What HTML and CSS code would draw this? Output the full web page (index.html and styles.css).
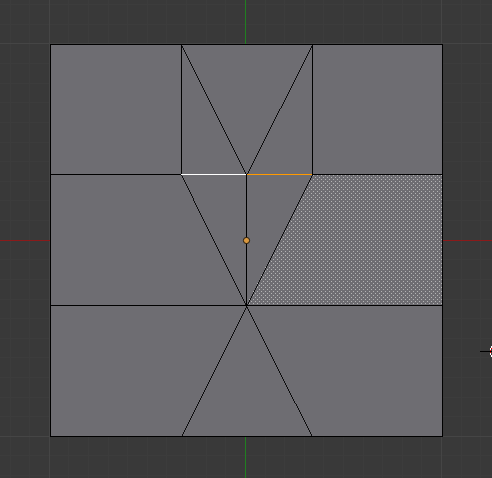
FILE: index.html

```html
<!DOCTYPE html>
<html lang="en">
<head>
<meta charset="utf-8">
<title>Viewport</title>
<link rel="stylesheet" href="styles.css">
</head>
<body>
<svg class="viewport" width="492" height="478" viewBox="0 0 492 478" shape-rendering="crispEdges">
  <defs>
    <pattern id="dots" width="4" height="4" patternUnits="userSpaceOnUse">
      <rect class="dot" x="3" y="1" width="1" height="1"/>
      <rect class="dot" x="1" y="3" width="1" height="1"/>
    </pattern>
  </defs>
  <path class="minor" d="M10.5 0V478M29.5 0V478M68.5 0V478M88.5 0V478M108.5 0V478M127.5 0V478M147.5 0V478M166.5 0V478M186.5 0V478M206.5 0V478M225.5 0V478M265.5 0V478M284.5 0V478M304.5 0V478M323.5 0V478M343.5 0V478M363.5 0V478M382.5 0V478M402.5 0V478M421.5 0V478M461.5 0V478M480.5 0V478M0 4.5H492M0 24.5H492M0 63.5H492M0 83.5H492M0 102.5H492M0 122.5H492M0 142.5H492M0 161.5H492M0 181.5H492M0 200.5H492M0 220.5H492M0 259.5H492M0 279.5H492M0 299.5H492M0 318.5H492M0 338.5H492M0 357.5H492M0 377.5H492M0 397.5H492M0 416.5H492M0 455.5H492M0 475.5H492"/>
  <path class="major" d="M49.5 0V478M441.5 0V478M0 43.5H492M0 436.5H492"/>
  <path class="axis-x" d="M0 240.5H492"/>
  <path class="axis-y" d="M245.5 0V478"/>
  <rect class="face" x="50" y="44" width="393" height="393"/>
  <path fill="url(#dots)" d="M312.5 174.5H442V305H246.5Z"/>
  <path class="edge" d="M50.5 44.5H442.5V436H50.5ZM50 174.5H443M50 305.5H443M181.5 44V174M312.5 44V174M246.5 174V305"/>
  <path class="edge diagonal" d="M181.6 44.5L246.6 174.5L312.4 44.5M181.6 174.5L246.6 305.5L312.4 174.5M181.4 436L246.6 305.5L312.4 436"/>
  <path class="selected" d="M181 174.5H246"/>
  <path class="active" d="M247 174.5H312"/>
  <circle class="origin" cx="246.5" cy="240.5" r="3.1"/>
  <path class="cursor-red" d="M490.5 349V355M491.5 348V349M491.5 355V356"/>
  <path class="cursor-white" d="M491.5 346V348M490.5 348V350M490.5 353V355M491.5 355V357"/>
  <path class="edge" d="M480 351.5H492"/>
</svg>
</body>
</html>
```

FILE: styles.css

```css
body {
  margin: 0;
  background: #393939;
  overflow: hidden;
}
.viewport { display: block; }
.minor { stroke: #3c3c3c; fill: none; }
.major { stroke: #454545; fill: none; }
.axis-x { stroke: #8b1a1a; }
.axis-y { stroke: #208020; }
.face { fill: #6e6d72; }
.dot { fill: #b4b4b4; }
.edge { stroke: #000; fill: none; }
.diagonal { stroke-width: 0.87; }
.selected { stroke: #fff; }
.active { stroke: #ff9a00; }
.origin { fill: #d9983f; stroke: #21180c; shape-rendering: geometricPrecision; }
.cursor-red { stroke: #f00; }
.cursor-white { stroke: #fff; }
```
